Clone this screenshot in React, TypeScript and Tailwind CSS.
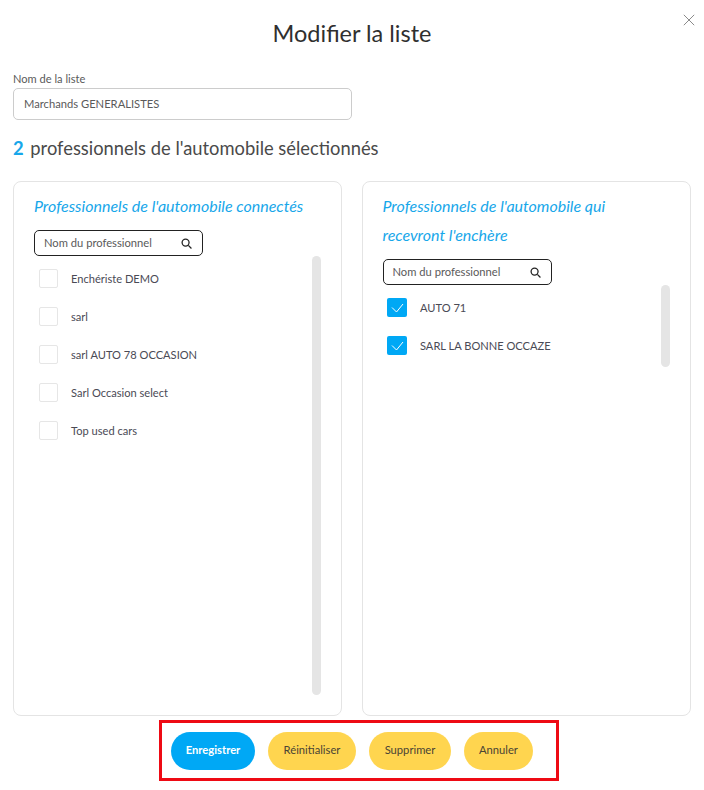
import React from "react";

function SearchBox() {
  return (
    <div className="flex h-[26px] w-[169px] items-center justify-between rounded-[5px] border border-[#222222] pl-[9px] pr-[10px] text-[11.2px] text-[#5a5a5a]">
      <span>Nom du professionnel</span>
      <svg width="11" height="11" viewBox="0 0 12 12" fill="none" stroke="#222222" strokeWidth="1.4">
        <circle cx="5" cy="5" r="3.8" />
        <path d="M8 8l3.4 3.4" />
      </svg>
    </div>
  );
}

function Row({ label, checked }: { label: string; checked?: boolean }) {
  return (
    <div className="flex h-[38px] items-center">
      {checked ? (
        <span className="mb-[1px] ml-[4.5px] flex h-[19px] w-[20px] items-center justify-center rounded-[2px] bg-[#00a8f5]">
          <svg width="13" height="10" viewBox="0 0 13 10" fill="none" stroke="#ffffff" strokeWidth="1">
            <path d="M1 4.5l4.5 4.5L12 1" />
          </svg>
        </span>
      ) : (
        <span className="mb-[2px] ml-[5px] h-[19px] w-[19px] rounded-[2px] border border-[#e6e6e6]" />
      )}
      <span className="ml-[13px] text-[11.1px] text-[#4a4a55]">{label}</span>
    </div>
  );
}

function Panel({
  title,
  rows,
  checked,
  barHeight,
  paddingLeft,
}: {
  title: React.ReactNode;
  rows: string[];
  checked?: boolean;
  barHeight: string;
  paddingLeft: string;
}) {
  return (
    <section className={`${paddingLeft} h-[535px] w-[329px] rounded-[8px] border border-[#e4e4e4] pr-[20px] pt-[9px]`}>
      <h2 className="text-[16px] font-normal italic leading-[29px] text-[#17a7ea]">{title}</h2>
      <div className="mt-[10px]">
        <SearchBox />
      </div>
      <div className="flex justify-between">
        <div className="pt-[4px]">
          {rows.map((r) => (
            <Row key={r} label={r} checked={checked} />
          ))}
        </div>
        <div className={`${barHeight} w-[9px] rounded-[5px] bg-[#e5e5e5]`} />
      </div>
    </section>
  );
}

export default function App() {
  return (
    <div className="relative h-[790px] w-[704px] overflow-hidden bg-white font-['Lato','Noto_Sans',sans-serif] text-[#333333]">
      <button className="absolute right-[9px] top-[14px]" aria-label="Fermer">
        <svg width="12" height="12" viewBox="0 0 12 12" fill="none" stroke="#8a8a8a" strokeWidth="1">
          <path d="M.8.8l10.4 10.4M11.2.8L.8 11.2" />
        </svg>
      </button>
      <h1 className="pt-[18px] text-center text-[23.5px] font-normal leading-[30px] text-[#2f2f2f]">Modifier la liste</h1>
      <div className="px-[13px]">
        <label className="mt-[23px] block text-[11.1px] leading-[15px] text-[#5a5a5a]">Nom de la liste</label>
        <div className="mt-[2px] flex h-[32px] w-[339px] items-center rounded-[5px] border border-[#cccccc] pl-[10px] text-[11.2px] text-[#5a5a5a]">
          Marchands GENERALISTES
        </div>
        <p className="mt-[17px] text-[18.35px] leading-[22px] text-[#4a4a4a]">
          <span className="mr-[2px] font-bold text-[#17a7ea]">2</span> professionnels de l'automobile sélectionnés
        </p>
        <div className="mt-[22px] flex gap-[20px]">
          <Panel
            title="Professionnels de l'automobile connectés"
            rows={["Enchériste DEMO", "sarl", "sarl AUTO 78 OCCASION", "Sarl Occasion select", "Top used cars"]}
            barHeight="h-[439px]"
            paddingLeft="pl-[20px]"
          />
          <Panel
            title={
              <>
                Professionnels de l'automobile qui
                <br />
                recevront l'enchère
              </>
            }
            rows={["AUTO 71", "SARL LA BONNE OCCAZE"]}
            checked
            barHeight="h-[82px]"
            paddingLeft="pl-[19.5px]"
          />
        </div>
      </div>
      <div className="ml-[159px] mt-[4px] flex h-[61px] w-[400px] items-center gap-[13px] border-[3px] border-[#ee0a14] pl-[9px] text-[11.2px]">
        <button className="h-[38px] w-[84px] rounded-full bg-[#00a8f5] font-bold text-white">Enregistrer</button>
        <button className="h-[38px] w-[88px] rounded-full bg-[#ffd54f] text-[#4a4435]">Réinitialiser</button>
        <button className="h-[38px] w-[82px] rounded-full bg-[#ffd54f] text-[#4a4435]">Supprimer</button>
        <button className="h-[38px] w-[69px] rounded-full bg-[#ffd54f] text-[#4a4435]">Annuler</button>
      </div>
    </div>
  );
}
